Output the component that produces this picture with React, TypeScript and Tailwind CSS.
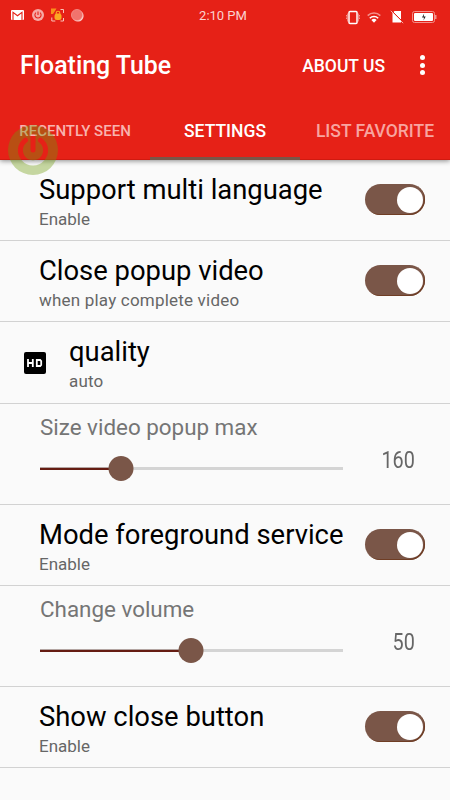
import type { ReactNode } from "react";

interface SettingRowProps {
	title: string;
	summary: string;
	icon?: ReactNode;
	hasSwitch?: boolean;
	summaryClass?: string;
	className?: string;
}

interface SliderRowProps {
	title: string;
	value: number;
	percent: number;
}

function StatusBar() {
	return (
		<div className="flex h-8 items-center justify-between pl-[11px] pr-[13px] text-white">
			<div className="flex w-[140px] items-center pb-[2px]">
				<svg width="13" height="10" viewBox="0 0 13 10">
					<rect width="13" height="10" rx="1" fill="#fff" />
					<path d="M2 10V2.4l4.5 3.4L11 2.4V10" fill="none" stroke="#e62117" strokeWidth="1.1" />
				</svg>
				<svg className="ml-2" width="12" height="12" viewBox="0 0 12 12">
					<circle cx="6" cy="6" r="6" fill="#f6a9a5" />
					<path d="M4 3.6a3.1 3.1 0 1 0 4 0M6 2.4V6" fill="none" stroke="#e62117" strokeWidth="1.1" />
				</svg>
				<svg className="ml-[7px]" width="14" height="14" viewBox="0 0 14 14">
					<path d="M0 .5h5.5L4 3 2 6H0z" fill="#f9901b" />
					<path d="M9.5 1.5h3V5M.8 9.5V13h3.5M9.5 13h3V10" fill="none" stroke="#fac3b8" strokeWidth="1" />
					<rect x="3.5" y="5.5" width="7" height="6.5" rx="2.5" fill="#fba922" />
					<path d="M5.2 6V5a1.8 1.8 0 0 1 3.6 0v1" fill="none" stroke="#fba922" strokeWidth="1.1" />
				</svg>
				<svg className="ml-[6px]" width="13" height="13" viewBox="0 0 13 13">
					<circle cx="7" cy="7" r="5.6" fill="#fcd5d2" />
					<circle cx="6" cy="6" r="5.6" fill="#f1736c" stroke="#f7a9a5" strokeWidth="0.6" />
				</svg>
			</div>
			<span className="pr-[2px] text-[13px] text-[#fbd3d1]">2:10 PM</span>
			<div className="flex w-[140px] items-center justify-end pt-[2px]">
				<svg width="14" height="15" viewBox="0 0 14 15">
					<rect x="3" y="1.5" width="8" height="12" rx="1" fill="none" stroke="#fff" strokeWidth="1.5" />
					<path d="M1.5 3.5v8M12.5 3.5v8" stroke="#f07d77" />
					<path d="M.5 5v5M13.5 5v5" stroke="#f3908b" strokeDasharray="1.5 1" />
				</svg>
				<svg className="ml-[7px]" width="14" height="11" viewBox="0 0 14 11">
					<path d="M.7 3.6a9 9 0 0 1 12.6 0" fill="none" stroke="#f3908b" strokeWidth="1.6" />
					<path d="M2.8 6.2a6 6 0 0 1 8.4 0" fill="none" stroke="#fff" strokeWidth="1.6" />
					<path d="M4.4 8a3.7 3.7 0 0 1 5.2 0L7 10.8z" fill="#fff" />
				</svg>
				<svg className="ml-[9px]" width="14" height="14" viewBox="0 0 14 14">
					<path d="M4.5 1H11v11.5H2.5V3z" fill="#fff" />
					<path d="M1.6.6l12 12" stroke="#e62117" strokeWidth="1" />
					<path d="M.8.8l12.4 12.4" stroke="#fbd3d1" strokeWidth="0.8" />
				</svg>
				<svg className="ml-2" width="25" height="12" viewBox="0 0 25 12">
					<rect x=".5" y=".5" width="22" height="11" rx="2" fill="none" stroke="#f3908b" />
					<rect x="2" y="2" width="19" height="8" rx="1" fill="#fff" />
					<path d="M23.5 4v4" stroke="#f3908b" strokeWidth="2" />
					<path d="M12.2 2.5L10 6.4h2l-.5 3L13.7 5.6h-2z" fill="#222" />
				</svg>
			</div>
		</div>
	);
}

function PowerBubble() {
	return (
		<svg className="absolute left-2 top-[125px]" width="50" height="50" viewBox="0 0 50 50">
			<mask id="power">
				<rect width="50" height="50" fill="#fff" />
				<path
					d="M17.5 15.2a12.6 12.6 0 1 0 15 0M25 11.5v13.5"
					fill="none"
					stroke="#000"
					strokeWidth="5"
					strokeLinecap="round"
				/>
			</mask>
			<circle cx="25" cy="25" r="25" fill="#6e9b0d" fillOpacity="0.38" mask="url(#power)" />
		</svg>
	);
}

function Header() {
	return (
		<header className="relative z-10 h-40 bg-[#e62117] shadow-[0_1px_5px_rgba(0,0,0,0.45)]">
			<StatusBar />
			<div className="flex h-[68px] items-center pl-5 text-white">
				<h1 className="text-[24.9px] font-medium">Floating Tube</h1>
				<span className="ml-auto text-[17.5px] font-medium">ABOUT US</span>
				<div className="ml-[35px] mr-[25px] flex flex-col gap-[2.5px] pb-[2px]">
					<i className="size-[5px] rounded-full bg-white" />
					<i className="size-[5px] rounded-full bg-white" />
					<i className="size-[5px] rounded-full bg-white" />
				</div>
			</div>
			<nav className="grid h-[60px] grid-cols-3 text-center font-medium leading-[62px] shadow-[inset_0_-1px_0_#d01a10]">
				<span className="h-[60px] text-[15px] text-[#f8b3af]">RECENTLY SEEN</span>
				<span className="h-[60px] border-b-3 border-[#7a5648] text-[17.5px] text-white">SETTINGS</span>
				<span className="h-[60px] text-[17.5px] text-[#f8a5a0]">LIST FAVORITE</span>
			</nav>
			<PowerBubble />
		</header>
	);
}

function Switch() {
	return (
		<div className="mb-px flex h-[31px] w-[60px] items-center justify-end rounded-full bg-[#7a5648] pr-[2px] shadow-[inset_-1px_-1px_0_#6f3d24]">
			<div className="size-[26px] rounded-full bg-white" />
		</div>
	);
}

function SettingRow({ title, summary, icon, hasSwitch, summaryClass, className }: SettingRowProps) {
	return (
		<div className={`flex items-center border-b border-[#d2d2d2] pr-[25px] ${className ?? "h-[81px]"}`}>
			<div className={icon ? "w-[69px] pl-6" : "w-[39px]"}>{icon}</div>
			<div className={`flex-1 whitespace-nowrap ${icon ? "pt-px" : "pt-[3px]"}`}>
				<p className="text-[27.4px] leading-[33px] text-black">{title}</p>
				<p className={`mt-[2px] text-[17px] leading-5 text-[#666] ${summaryClass ?? ""}`}>{summary}</p>
			</div>
			{hasSwitch && <Switch />}
		</div>
	);
}

function SliderRow({ title, value, percent }: SliderRowProps) {
	return (
		<div className="flex h-[101px] border-b border-[#d2d2d2] pl-10">
			<div className="w-[303px]">
				<p className="mt-[9px] whitespace-nowrap text-[22.4px] leading-7 text-[#757575]">{title}</p>
				<div className="relative mt-[14px] flex h-[26px] items-center">
					<div className="h-[3px] w-full bg-[#d4d4d4]">
						<div
							className="h-full border-t border-[#b3a5a2] bg-[#651c12]"
							style={{ width: `${percent}%` }}
						/>
					</div>
					<div
						className="absolute size-[25px] -translate-x-1/2 rounded-full bg-[#7a5648]"
						style={{ left: `${percent}%` }}
					/>
				</div>
			</div>
			<span className="ml-auto mr-[35px] mt-[43px] origin-right scale-x-[0.86] text-[23px] leading-7 text-[#666]">
				{value}
			</span>
		</div>
	);
}

function HdIcon() {
	return (
		<svg width="22" height="22" viewBox="0 0 22 22">
			<rect width="22" height="22" rx="2" fill="#000" />
			<path d="M4 7v8M8.8 7v8M4 11h4.8M12.8 8h3.4l1 1v4l-1 1h-3.4z" fill="none" stroke="#fff" strokeWidth="1.8" />
		</svg>
	);
}

export default function App() {
	return (
		<div className="h-[800px] w-[450px] overflow-hidden bg-[#fafafa] font-['Roboto',sans-serif]">
			<Header />
			<SettingRow title="Support multi language" summary="Enable" hasSwitch />
			<SettingRow
				title="Close popup video"
				summary="when play complete video"
				summaryClass="tracking-[0.2px]"
				hasSwitch
			/>
			<SettingRow title="quality" summary="auto" summaryClass="tracking-[0.2px]" icon={<HdIcon />} className="h-[82px]" />
			<SliderRow title="Size video popup max" value={160} percent={26.6} />
			<SettingRow title="Mode foreground service" summary="Enable" hasSwitch />
			<SliderRow title="Change volume" value={50} percent={49.9} />
			<SettingRow title="Show close button" summary="Enable" hasSwitch />
		</div>
	);
}
